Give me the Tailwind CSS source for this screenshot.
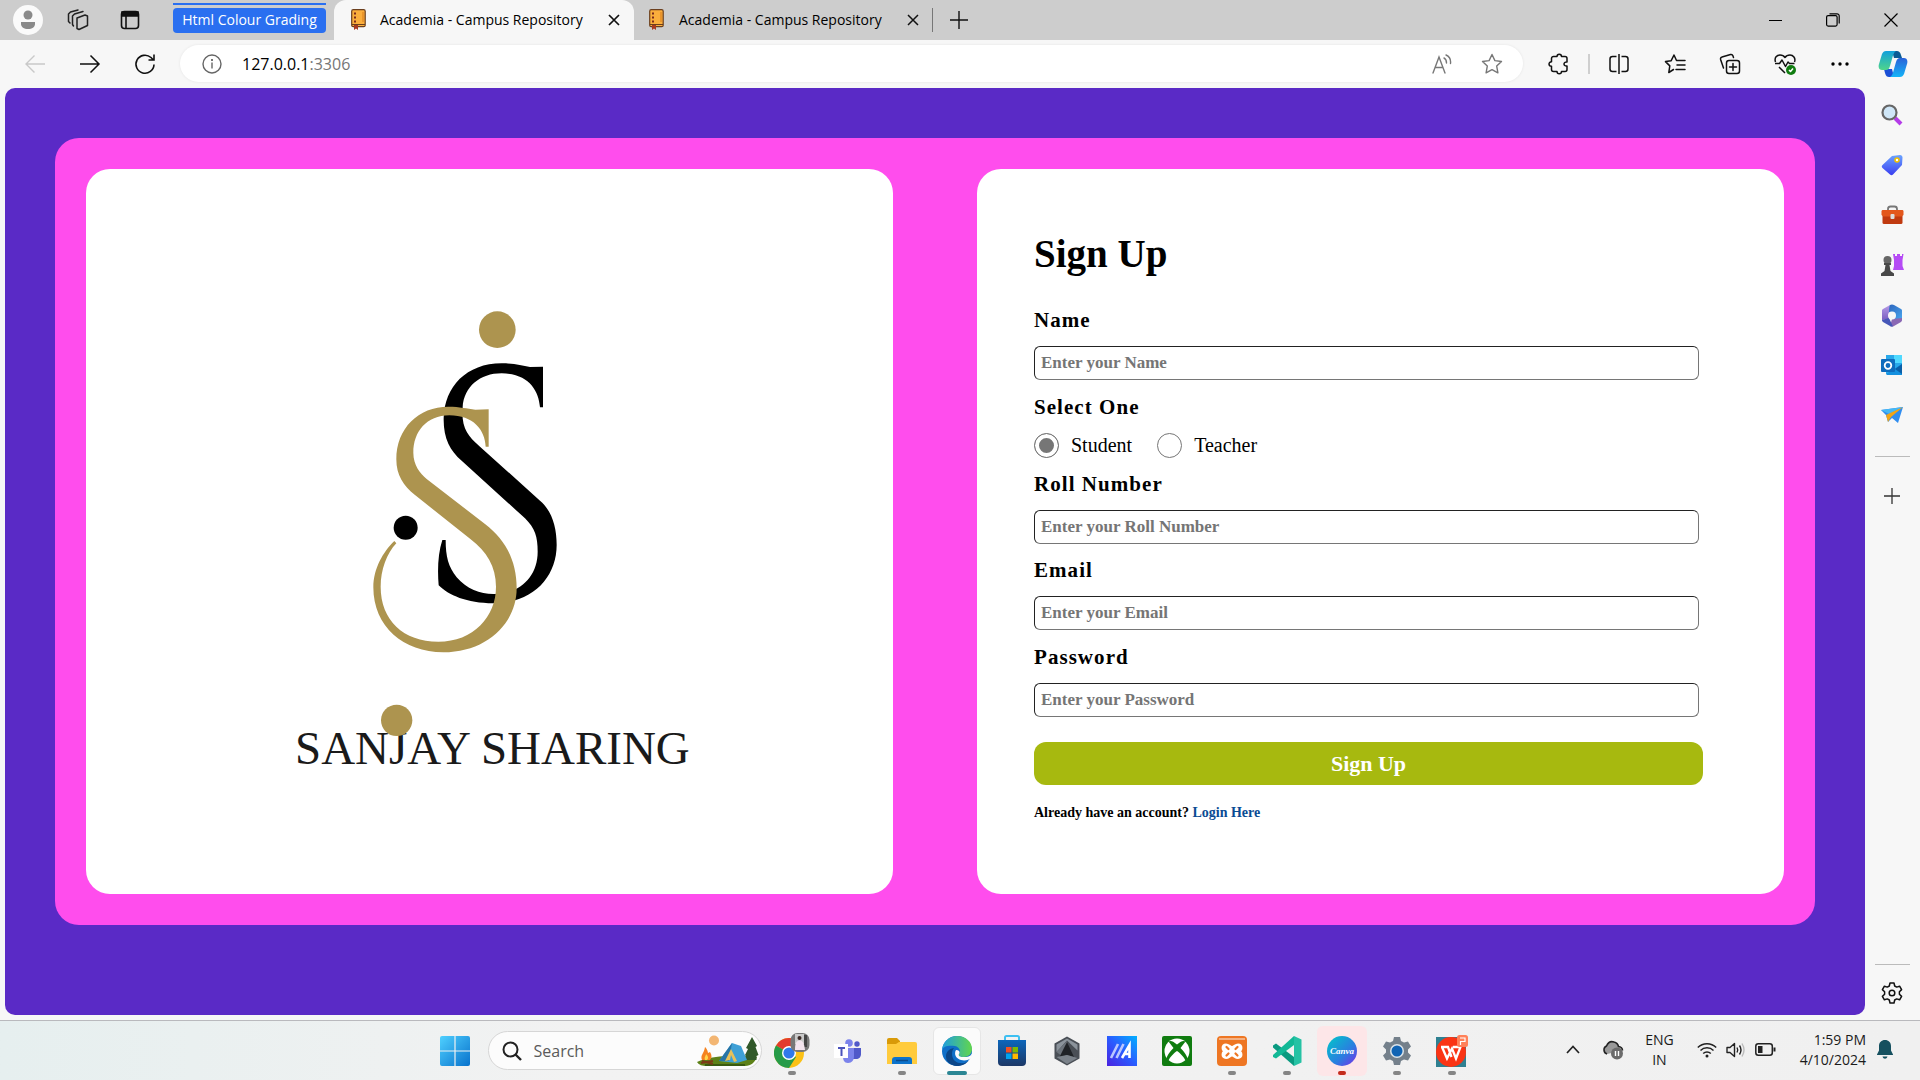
<!DOCTYPE html>
<html lang="en">
<head>
<meta charset="utf-8">
<title>Academia - Campus Repository</title>
<script src="https://cdn.jsdelivr.net/npm/@tailwindcss/browser@4"></script>
</head>
<body class="min-h-screen flex flex-col bg-[#f7f7f7] text-black font-['Open_Sans','Noto_Sans',sans-serif]">

<!-- Tab strip -->
<header class="h-10 bg-[#cdcdcd] flex items-center text-[15px]">
  <button aria-label="Profile" class="ml-[13px] size-[30px] rounded-full bg-[#fafafa] flex items-center justify-center">
    <svg width="18" height="20" viewBox="0 0 18 20" fill="#8a8a8a"><circle cx="9" cy="5" r="4.5"/><path d="M2 12h14v2c0 3-3 5-7 5s-7-2-7-5z"/></svg>
  </button>
  <button aria-label="Workspaces" class="ml-6">
    <svg width="22" height="22" viewBox="0 0 22 22" fill="none" stroke="#222" stroke-width="1.5" stroke-linejoin="round"><path d="M10 9l8-3 2.500 1v9.500l-8.500 4-2-1z"/><path d="M6.500 17L5.500 15.500V7l2-2L16 2.500M3 14l-1.500-1.500V5l2-2L11 1" stroke-linecap="round"/></svg>
  </button>
  <button aria-label="Tab actions" class="ml-[31px]">
    <svg width="20" height="20" viewBox="0 0 20 20" fill="none" stroke="#111" stroke-width="1.6"><rect x="1.5" y="1.500" width="17" height="17" rx="3"/><path d="M2 2h16v4H2z" fill="#111"/><path d="M6 6v12"/></svg>
  </button>
  <div class="ml-[33px] w-[153px] h-[30px] -mt-1 border-t-2 border-[#2a6ff0] pt-[3px]">
    <button class="w-full h-[25px] pb-[2px] rounded bg-[#2a6ff0] text-white text-[14px] leading-[22px] whitespace-nowrap flex items-center justify-center">Html Colour Grading</button>
  </div>
  <div class="ml-2 w-[300px] h-10 rounded-t-xl bg-[#f7f7f7] flex items-center pl-[17px] pr-[14px] pb-px">
    <svg width="15" height="21" viewBox="0 0 15 21"><rect x=".7" y=".7" width="13.500" height="17" rx="1.500" fill="#fbae3c" stroke="#6b3f1e" stroke-width="1.200"/><path d="M1 15.500h13" stroke="#6b3f1e"/><path d="M3 3.500h2v2H3zM3 7.500h2v2H3zM3 11.500h2v2H3z" fill="#7b2a1c"/><path d="M3 16h4v5l-2-1.500L3 21z" fill="#a8391f"/><path d="M12 3v10" stroke="#d97c1c"/></svg>
    <span class="ml-[14px] flex-1 text-[14px] whitespace-nowrap">Academia - Campus Repository</span>
    <button aria-label="Close tab"><svg width="12" height="12" viewBox="0 0 12 12" stroke="#111" stroke-width="1.700"><path d="M1 1l10 10M11 1L1 11"/></svg></button>
  </div>
  <div class="w-[298px] h-10 flex items-center pl-[15px] pr-[13px] pb-px">
    <svg width="15" height="21" viewBox="0 0 15 21"><rect x=".7" y=".7" width="13.500" height="17" rx="1.500" fill="#fbae3c" stroke="#6b3f1e" stroke-width="1.200"/><path d="M1 15.500h13" stroke="#6b3f1e"/><path d="M3 3.500h2v2H3zM3 7.500h2v2H3zM3 11.500h2v2H3z" fill="#7b2a1c"/><path d="M3 16h4v5l-2-1.500L3 21z" fill="#a8391f"/><path d="M12 3v10" stroke="#d97c1c"/></svg>
    <span class="ml-[15px] flex-1 text-[14px] whitespace-nowrap">Academia - Campus Repository</span>
    <button aria-label="Close tab"><svg width="12" height="12" viewBox="0 0 12 12" stroke="#111" stroke-width="1.500"><path d="M1 1l10 10M11 1L1 11"/></svg></button>
  </div>
  <span class="w-px h-6 bg-[#777]"></span>
  <button aria-label="New tab" class="ml-[17px]"><svg width="18" height="18" viewBox="0 0 18 18" stroke="#111" stroke-width="1.400"><path d="M9 0v18M0 9h18"/></svg></button>
  <div class="ml-auto flex items-center gap-11 pr-[22px]">
    <button aria-label="Minimize"><svg width="13" height="13" viewBox="0 0 13 13" stroke="#000"><path d="M0 6.500h13"/></svg></button>
    <button aria-label="Restore"><svg width="14" height="14" viewBox="0 0 14 14" fill="none" stroke="#000" stroke-width="1.200"><rect x=".6" y="2.600" width="10.500" height="10.500" rx="1.500"/><path d="M3.500.8H11a2.200 2.200 0 012.200 2.200v7.500"/></svg></button>
    <button aria-label="Close"><svg width="14" height="14" viewBox="0 0 14 14" stroke="#000" stroke-width="1.200"><path d="M.5.5l13 13M13.500.5l-13 13"/></svg></button>
  </div>
</header>

<!-- Address bar -->
<nav class="h-12 flex items-center pb-px">
  <button aria-label="Back" class="ml-6"><svg width="22" height="20" viewBox="0 0 22 20" fill="none" stroke="#c9c9c9" stroke-width="1.400"><path d="M21 10H2M10.500 1.500L2 10l8.500 8.500"/></svg></button>
  <button aria-label="Forward" class="ml-[33px]"><svg width="22" height="20" viewBox="0 0 22 20" fill="none" stroke="#111" stroke-width="1.500"><path d="M1 10h19M11.500 1.500L20 10l-8.500 8.500"/></svg></button>
  <button aria-label="Refresh" class="ml-[33px]"><svg width="22" height="22" viewBox="0 0 22 22" fill="none" stroke="#111" stroke-width="1.600"><path d="M20 11.500A9 9 0 1117 4.500L19.500 7M20 1.500V7h-5.500"/></svg></button>
  <div class="ml-[24px] flex-1 h-[37px] rounded-full bg-white flex items-center pl-[22px] pr-[20px] shadow-[0_0_3px_rgba(0,0,0,0.08)]">
    <svg width="20" height="20" viewBox="0 0 20 20" fill="none" stroke="#666" stroke-width="1.400"><circle cx="10" cy="10" r="9"/><path d="M10 8.500v6"/><path d="M10 5v2" stroke-width="1.800"/></svg>
    <span class="ml-[20px] flex-1 text-[16px]">127.0.0.1<span class="text-[#767676]">:3306</span></span>
    <button aria-label="Read aloud" class="mr-[29px]"><svg width="20" height="20" viewBox="0 0 20 20" fill="none" stroke="#777" stroke-width="1.400" stroke-linecap="round"><path d="M1 19L7 3l6 16M3.300 13.500h7.500M12 4c2 1 2.500 3 2.500 5M14 1c3.500 1.500 5 4.500 4.500 8.500"/></svg></button>
    <button aria-label="Favourite"><svg width="22" height="22" viewBox="0 0 22 22" fill="none" stroke="#777" stroke-width="1.400" stroke-linejoin="round"><path d="M11 1.500l2.900 6.100 6.600.9-4.800 4.600 1.200 6.700-5.900-3.200-5.900 3.200 1.200-6.700L1.500 8.500l6.600-.9z"/></svg></button>
  </div>
  <div class="ml-[25px] mr-3 flex items-center">
    <button aria-label="Extensions"><svg width="22" height="22" viewBox="0 0 22 22" fill="none" stroke="#111" stroke-width="1.500" stroke-linejoin="round"><path d="M5.500 3.500H9c0-3 4.500-3 4.500 0H17a2 2 0 012 2V9c-4-.5-4 4.500 0 4v3.500a2 2 0 01-2 2h-3.500c0 3-4.500 3-4.500 0H5.500a2 2 0 01-2-2V13.300c-3.300 0-3.300-4.600 0-4.600V5.500a2 2 0 012-2z"/></svg></button>
    <span class="mx-[18px] w-[2px] h-5 bg-[#cfcfcf]"></span>
    <button aria-label="Split screen"><svg width="22" height="22" viewBox="0 0 22 22" fill="none" stroke="#111" stroke-width="1.500"><path d="M8.500 3.500h-4a2.500 2.500 0 00-2.500 2.500v10a2.500 2.500 0 002.500 2.500h4M13.500 3.500h4A2.500 2.500 0 0120 6v10a2.500 2.500 0 01-2.500 2.500h-4M11 1v20"/></svg></button>
    <button aria-label="Favourites" class="ml-[34px]"><svg width="22" height="22" viewBox="0 0 22 22" fill="none" stroke="#111" stroke-width="1.500" stroke-linejoin="round" stroke-linecap="round"><path d="M12.500 7.500L10 2 7.200 7.700 1.500 8.600l4.300 4.300L4.800 19.500l4.700-3M12.500 7.500H21M13 12h8M12 16.500h9"/></svg></button>
    <button aria-label="Collections" class="ml-[33px]"><svg width="22" height="22" viewBox="0 0 22 22" fill="none" stroke="#111" stroke-width="1.500" stroke-linecap="round"><rect x="7.500" y="7.500" width="13" height="13" rx="2.500"/><path d="M14 10.500v7M10.500 14h7M14.500 4.500l-.6-1.700A2 2 0 0011.500 1.500L3 4A2 2 0 001.600 6.500L4.500 15"/></svg></button>
    <button aria-label="Browser essentials" class="ml-[33px]"><svg width="22" height="22" viewBox="0 0 22 22" fill="none" stroke="#111" stroke-width="1.500" stroke-linejoin="round"><path d="M1.500 9C0 4.500 3 2 6 2c2.500 0 4 1 5 2.500C12 3 13.500 2 16 2c3 0 6 3 4.500 7M1 10.500h4.500L8 7l3.500 6.500L14 9l1.500 1.500h5M5 14l6 6"/><circle cx="17" cy="17" r="5" fill="#107c10" stroke="none"/><path d="M15 17l1.500 1.500 2.500-3" stroke="#fff"/></svg></button>
    <button aria-label="More" class="ml-[35px]"><svg width="18" height="4" viewBox="0 0 18 4"><circle cx="2" cy="2" r="1.700"/><circle cx="9" cy="2" r="1.700"/><circle cx="16" cy="2" r="1.700"/></svg></button>
    <button aria-label="Copilot" class="ml-[29px]"><svg width="30" height="28" viewBox="0 0 30 28"><defs><linearGradient id="cpa" x1="0" y1="0" x2="0" y2="1"><stop offset="0" stop-color="#12a0dc"/><stop offset="1" stop-color="#4fd58a"/></linearGradient><linearGradient id="cpb" x1="0" y1="0" x2="0" y2="1"><stop offset="0" stop-color="#2a62d8"/><stop offset="1" stop-color="#14b4f8"/></linearGradient></defs><path d="M14 1h5c2 0 3 1 4 4l1 3h-8z" fill="#0b5b95"/><path d="M16 27h-5c-2 0-3-1-4-4l-1-4h8z" fill="#1a4fd6"/><path d="M8 1h10c-2 1-3 4-4 8l-2 7c-1 3-2 4-4 4H4c-3 0-4-3-3-6L4 4c1-2 2-3 4-3z" fill="url(#cpa)"/><path d="M22 27H12c2-1 3-4 4-8l2-7c1-3 2-4 4-4h4c3 0 4 3 3 6l-3 10c-1 2-2 3-4 3z" fill="url(#cpb)"/></svg></button>
  </div>
</nav>

<div class="flex-1 flex pl-[5px] pb-[5px]">
  <!-- Web page -->
  <main class="flex-1 bg-[#5a2ac6] rounded-[10px] p-[50px]">
    <div class="bg-[#ff4ded] rounded-[24px] p-[31px] grid grid-cols-2 gap-[84px]">
      <section class="bg-white rounded-[24px] flex items-center justify-center pt-4">
        <svg width="420" height="500" viewBox="0 0 1260 1500" role="img" aria-label="Sanjay Sharing">
          <path fill="#000" d="M789 230V352H780C776 300 745 250 665 250C600 250 552 290 548 352V385C552 430 580 452 600 470L780 632C815 662 830 710 830 765C830 860 760 940 640 940C560 940 505 915 476 886C472 840 474 790 487 750H497C497 800 505 830 530 862C560 897 600 912 640 912C720 912 773 860 773 785C773 740 765 715 735 685L545 512C510 482 490 445 491 385C493 290 560 220 665 220C700 220 725 226 750 231Z"/>
          <path fill="#ad944f" d="M626 358V470H617C615 420 580 376 508 376C440 376 400 425 400 488C400 525 420 550 440 567L615 702C675 748 710 810 710 895C710 1000 620 1087 490 1087C370 1087 280 1010 280 892C280 835 310 785 343 753L349 760C320 790 302 840 302 890C302 990 370 1055 475 1055C580 1055 648 980 648 890C648 830 620 785 572 748L405 615C370 588 349 555 349 508C349 415 415 350 505 350C540 350 560 356 586 359Z"/>
          <circle cx="652" cy="119" r="55" fill="#ad944f"/>
          <circle cx="377" cy="713" r="36" fill="#000"/>
          <text x="45" y="1422" font-size="141" fill="#1a1a1a" font-family="Liberation Serif, serif">SANJAY SHARING</text>
          <circle cx="350" cy="1291" r="47" fill="#ad944f"/>
        </svg>
      </section>

      <section class="bg-white rounded-[24px] pt-[61px] pb-[71px] pl-[57px] pr-[81px] font-['Liberation_Serif',serif]">
        <form>
          <h1 class="text-[39px] leading-[48px] font-bold">Sign Up</h1>
          <div class="mt-7">
            <label for="name" class="block text-[21px] leading-[28px] font-bold tracking-wider">Name</label>
            <div class="mt-3 pr-1"><input id="name" type="text" placeholder="Enter your Name" class="block w-full h-[34px] px-[6px] rounded-[6px] border border-t-[#222] border-l-[#222] border-r-[#767676] border-b-[#767676] text-[17px] font-bold placeholder:text-[#757575]"></div>
          </div>
          <fieldset class="mt-[13px]">
            <legend class="block text-[21px] leading-[28px] font-bold tracking-wider">Select One</legend>
            <div class="mt-3 h-[25px] flex items-center text-[20px] leading-[25px]">
              <input id="student" type="radio" name="role" checked class="appearance-none size-[25px] rounded-full border border-[#767676] checked:bg-[#767676] checked:shadow-[inset_0_0_0_4px_#fff]">
              <label for="student" class="ml-3">Student</label>
              <input id="teacher" type="radio" name="role" class="ml-[25px] appearance-none size-[25px] rounded-full border border-[#767676] checked:bg-[#767676] checked:shadow-[inset_0_0_0_4px_#fff]">
              <label for="teacher" class="ml-3">Teacher</label>
            </div>
          </fieldset>
          <div class="mt-3">
            <label for="roll" class="block text-[21px] leading-[28px] font-bold tracking-wider">Roll Number</label>
            <div class="mt-3 pr-1"><input id="roll" type="text" placeholder="Enter your Roll Number" class="block w-full h-[34px] px-[6px] rounded-[6px] border border-t-[#222] border-l-[#222] border-r-[#767676] border-b-[#767676] text-[17px] font-bold placeholder:text-[#757575]"></div>
          </div>
          <div class="mt-3">
            <label for="email" class="block text-[21px] leading-[28px] font-bold tracking-wider">Email</label>
            <div class="mt-3 pr-1"><input id="email" type="email" placeholder="Enter your Email" class="block w-full h-[34px] px-[6px] rounded-[6px] border border-t-[#222] border-l-[#222] border-r-[#767676] border-b-[#767676] text-[17px] font-bold placeholder:text-[#757575]"></div>
          </div>
          <div class="mt-[13px]">
            <label for="password" class="block text-[21px] leading-[28px] font-bold tracking-wider">Password</label>
            <div class="mt-3 pr-1"><input id="password" type="password" placeholder="Enter your Password" class="block w-full h-[34px] px-[6px] rounded-[6px] border border-t-[#222] border-l-[#222] border-r-[#767676] border-b-[#767676] text-[17px] font-bold placeholder:text-[#757575]"></div>
          </div>
          <button type="submit" class="mt-[25px] w-full h-[43px] rounded-xl bg-[#a7b90f] text-white text-[22px] font-bold">Sign Up</button>
          <p class="mt-[18px] text-[14px] leading-5 font-bold">Already have an account? <a href="#login" class="text-[#0a4b93]">Login Here</a></p>
        </form>
      </section>
    </div>
  </main>

  <!-- Edge sidebar -->
  <aside class="w-[55px] flex flex-col items-center pt-[2px] pr-px">
    <button aria-label="Search" class="h-[50px] flex items-center"><svg width="22" height="22" viewBox="0 0 22 22"><path d="M14 14l6 6" stroke="#b43ce8" stroke-width="4"/><circle cx="8.500" cy="8.500" r="7" fill="#cfe6f7" stroke="#666" stroke-width="2.200"/></svg></button>
    <button aria-label="Shopping" class="h-[50px] flex items-center"><svg width="22" height="22" viewBox="0 0 22 22"><defs><linearGradient id="tg" x1="0" y1="0" x2="0" y2="1"><stop offset="0" stop-color="#6ba4ff"/><stop offset="1" stop-color="#3a3df0"/></linearGradient></defs><path d="M11 2l8-1c1.500 0 2.500 1 2.500 2.500L21 11l-9 9.500c-1 1-2 1-3 0L1.500 14c-1-1-1-2 0-3z" fill="url(#tg)"/><circle cx="16" cy="6" r="2" fill="#fff" stroke="#f2c200" stroke-width="1.600"/></svg></button>
    <button aria-label="Tools" class="h-[50px] flex items-center"><svg width="23" height="20" viewBox="0 0 23 20"><path d="M7 6V4c0-2 1-2.500 2.500-2.500h4C15 1.500 16 2 16 4v2" fill="none" stroke="#777" stroke-width="1.800"/><rect x="1.500" y="9" width="20" height="10" rx="1.500" fill="#c03a10"/><path d="M.5 6.500C.5 5.500 1 5 2 5h19c1 0 1.500.5 1.500 1.500V10l-2 1.500h-18L.5 10z" fill="#e3571c"/><rect x="9.500" y="9" width="4" height="5" rx="1" fill="#ddd"/></svg></button>
    <button aria-label="Games" class="h-[50px] flex items-center"><svg width="24" height="24" viewBox="0 0 24 24"><path d="M13 1h2v2h2V1h3v2h2V1h1.500l-1 6v6l1.500 4H13l1-4V7z" fill="#b54bf5"/><circle cx="7.500" cy="7" r="4" fill="#666"/><path d="M4 10h7v2h-1.500l1 6 3.500 2.500V23H1v-2.500L4.500 18l1-6H4z" fill="#484848"/></svg></button>
    <button aria-label="Microsoft 365" class="h-[50px] flex items-center"><svg width="22" height="23" viewBox="0 0 22 23"><defs><linearGradient id="ma3" x1="0" y1="0" x2="0" y2="1"><stop offset="0" stop-color="#b69be8"/><stop offset="1" stop-color="#7a5fc0"/></linearGradient><linearGradient id="mb3" x1="0" y1="0" x2="1" y2="1"><stop offset="0" stop-color="#2a5fb8"/><stop offset="1" stop-color="#4aa8f0"/></linearGradient></defs><path d="M9 1c1-.7 3-.7 4 0l7 4c1 .6 1 1 1 2v9l-7 1-6-9-3-3z" fill="url(#mb3)"/><path d="M9 1L2 5C1 5.600 1 6 1 7v9l7-1V9c0-3 0-6 1-8z" fill="url(#ma3)"/><path d="M21 14v2c0 1-.5 1.500-1 2l-7 4c-1 .7-3 .7-4 0l2-7z" fill="#8a68b4"/><path d="M1 16l7-2 4 8.500c-1 .2-2.200 0-3-.5l-7-4c-.5-.5-1-1-1-2z" fill="#4657b8"/><circle cx="11" cy="11.500" r="4" fill="#f7f7f7"/></svg></button>
    <button aria-label="Outlook" class="h-[50px] flex items-center"><svg width="22" height="22" viewBox="0 0 22 22"><path d="M5 1h16v19H5z" fill="#28a8ea"/><path d="M13 1h8v8h-8z" fill="#50d9ff"/><path d="M5 20l16-10v11H6z" fill="#1490df"/><path d="M21 10l-7 5 7 5z" fill="#0a5fa8"/><rect x="0" y="5" width="14" height="13" rx="1" fill="#0f6cbd"/><circle cx="7" cy="11.500" r="3.300" fill="none" stroke="#fff" stroke-width="1.800"/></svg></button>
    <button aria-label="Drop" class="h-[50px] flex items-center"><svg width="23" height="18" viewBox="0 0 23 18"><path d="M0 4L22 1l-5 16-6-5-4 4-2-7z" fill="#2f8df0"/><path d="M0 4L22 1 8 8z" fill="#45b8f5"/><path d="M22 1L5 9l2 7 3-5z" fill="#f2a516"/></svg></button>
    <hr class="mt-4 w-[35px] border-[#bbb]">
    <button aria-label="Customize" class="mt-[31px]"><svg width="16" height="16" viewBox="0 0 16 16" stroke="#333" stroke-width="1.300"><path d="M8 0v16M0 8h16"/></svg></button>
    <hr class="mt-auto w-[35px] border-[#bbb]">
    <button aria-label="Settings" class="mt-[17px] mb-[11px]"><svg width="22" height="22" viewBox="0 0 22 22" fill="none" stroke="#111" stroke-width="1.500" stroke-linejoin="round"><path d="M9 1h4l.7 3 2 1.100 2.900-.9 2 3.400-2.200 2.100v2.600l2.200 2.100-2 3.400-2.900-.9-2 1.100L13 21H9l-.7-3-2-1.100-2.900.9-2-3.400 2.200-2.100V9.700L1.400 7.600l2-3.400 2.900.9 2-1.100z"/><circle cx="11" cy="11" r="2.800"/></svg></button>
  </aside>
</div>

<!-- Taskbar -->
<footer class="h-[60px] border-t border-[#b9b9bd] bg-linear-to-r from-[#e6efef] via-[#f2f2f2] via-30% to-[#f0f0f0] flex items-center">
  <div class="flex-1 pl-[14px]"></div>
  <div class="flex items-center h-full">
    <button aria-label="Start" class="w-[55px] h-full flex items-center justify-center"><svg width="30" height="30" viewBox="0 0 30 30"><defs><linearGradient id="wn" x1="0" y1="0" x2="1" y2="1" gradientUnits="objectBoundingBox"><stop offset="0" stop-color="#4fd0ff"/><stop offset="1" stop-color="#0872cc"/></linearGradient></defs><path d="M2 0h12.400v14.400H0V2a2 2 0 012-2zM15.600 0H28a2 2 0 012 2v12.400H15.600zM0 15.600h14.400V30H2a2 2 0 01-2-2zM15.600 15.600H30V28a2 2 0 01-2 2H15.600z" fill="url(#wn)"/></svg></button>
    <div class="ml-[5px] mr-[3px] w-[274px] h-[39px] rounded-full bg-[#fcfcfc] border border-[#d6d6d6] flex items-center pl-[13px] pr-[2px] overflow-hidden">
      <svg width="20" height="20" viewBox="0 0 20 20" fill="none" stroke="#222" stroke-width="2"><circle cx="8.500" cy="8.500" r="7"/><path d="M13.500 13.500L19 19" stroke-width="2.400"/></svg>
      <input aria-label="Search" placeholder="Search" class="ml-[12px] w-28 flex-1 text-[16px] placeholder:text-[#5a5a5a] bg-transparent">
      <svg width="62" height="32" viewBox="0 0 62 32"><path d="M0 27C12 21 40 19 60 22c-2 5-6 9-12 9H10c-5 0-8-1-10-4z" fill="#5d8118"/><path d="M8 30h40" stroke="#395a12" stroke-width="2"/><circle cx="17" cy="5.500" r="5" fill="#f3b673"/><path d="M55 2l5 9-1.500 1 3 8-2 1v4H49v-4l-1-1 3-6-2-1z" fill="#31592a"/><path d="M22 26L35 8l9 3 6 14-10 3z" fill="#3fa0d6"/><path d="M35 8l-3 18H22z" fill="#2774a6"/><path d="M34 14l-6 12 5-1 1-5 3 7 3-1z" fill="#e8c15a"/><path d="M5 25c-2-5 2-6 3-13 3 3 3 6 3 6l2-1c2 3 2 6 0 8z" fill="#f58220"/><path d="M8 25c-1-3 1-4 1-6 2 2 3 4 1 6z" fill="#ffd54a"/><path d="M4 28l12-2M5 26l11 3" stroke="#7a3c17" stroke-width="2"/></svg>
    </div>
    <button aria-label="Chrome" class="relative w-[55px] h-full flex items-center justify-center"><svg width="36" height="38" viewBox="0 0 36 38"><circle cx="15" cy="21" r="15" fill="#fbc116"/><path d="M15 21L2 13.500A15 15 0 0128 13.500z" fill="#e33b2e"/><path d="M15 21L2 13.500A15 15 0 0015 36l7-11z" fill="#269b48"/><circle cx="15" cy="21" r="7" fill="#fff"/><circle cx="15" cy="21" r="5.600" fill="#3079ea"/><rect x="16.500" y="1" width="19" height="19" rx="7" fill="#777"/><rect x="21" y="2" width="9" height="10" fill="#c9c9c9"/><path d="M30 3h3v12h-3z" fill="#444"/><circle cx="25.500" cy="6" r="2" fill="#3a2a26"/><path d="M21 18c0-6 1-9.500 4.500-9.500S30 11 31 18z" fill="#f3e4ee"/></svg><span class="absolute bottom-[5px] w-2 h-1 rounded-full bg-[#858585]"></span></button>
    <button aria-label="Teams" class="w-[55px] h-full flex items-center justify-center"><svg width="27" height="24" viewBox="0 0 27 24"><circle cx="15" cy="4" r="3.800" fill="#7b83eb"/><circle cx="23" cy="5" r="2.700" fill="#5059c9"/><path d="M19 9h8v6c0 3-2 5-5 5h-3z" fill="#5059c9"/><path d="M9 9h11v8c0 4-2 7-6 7s-5-3-5-7z" fill="#7b83eb"/><rect y="5" width="14" height="14" fill="#fff"/><path d="M4 8h7v2H8.500v7h-2v-7H4z" fill="#4b53bc"/></svg></button>
    <button aria-label="File Explorer" class="relative w-[55px] h-full flex items-center justify-center"><svg width="30" height="26" viewBox="0 0 30 26"><path d="M0 2a2 2 0 012-2h8l3 3v5H0z" fill="#d99a08"/><path d="M0 6h9l3-2h16a2 2 0 012 2v20H0z" fill="#ffcb3d"/><path d="M5 26v-4a3 3 0 013-3h14a3 3 0 013 3v4z" fill="#0c73cb"/><path d="M9 22.500h12" stroke="#0a4b8c" stroke-width="1.500"/></svg><span class="absolute bottom-[5px] w-2 h-1 rounded-full bg-[#858585]"></span></button>
    <button aria-label="Edge" class="relative w-[55px] h-full flex items-center justify-center"><span class="w-12 h-[48px] rounded-md bg-[#fbfbfb] border border-[#e6e6e6] flex items-center justify-center"><svg width="30" height="30" viewBox="0 0 30 30"><defs><linearGradient id="ed" x1="0" y1="0" x2="1" y2="0"><stop offset="0" stop-color="#1e9ee0"/><stop offset="1" stop-color="#62d64c"/></linearGradient></defs><circle cx="15" cy="15" r="15" fill="#0f6fc8"/><path d="M0 14C1 5 8 0 15 0c9 0 15 6 15 13 0 5-4 8-8 8-4 0-6-1-5-3 2-2 1-7-4-8C7 9 1 10 0 14z" fill="url(#ed)"/><path d="M12 12c-4 5-2 14 6 15 4 1 8-1 10-4-5 8-15 9-21 4-5-4-4-14 5-15z" fill="#0b4688"/><path d="M14 14c-2 3-1 8 5 10 4 1 8 0 10-2l2-6c-2 4-5 5-9 5-4 0-6-1-5-3 1-1 1-4-3-4z" fill="#fbfbfb"/></svg></span><span class="absolute bottom-[5px] w-5 h-1 rounded-full bg-[#2b8694]"></span></button>
    <button aria-label="Microsoft Store" class="w-[55px] h-full flex items-center justify-center"><svg width="30" height="32" viewBox="0 0 30 32"><defs><linearGradient id="st" x1="0" y1="0" x2="0" y2="1"><stop offset="0" stop-color="#0c66bb"/><stop offset="1" stop-color="#1c3766"/></linearGradient></defs><path d="M8 7V2.500C8 1.500 8.500 1 9.500 1h11c1 0 1.500.5 1.500 1.500V7" fill="none" stroke="#3ec0f2" stroke-width="2"/><path d="M1 5h28v22a4 4 0 01-4 4H5a4 4 0 01-4-4z" fill="url(#st)"/><path d="M9 12h5.500v5.500H9z" fill="#f25022"/><path d="M15.500 12H21v5.500h-5.500z" fill="#7fba00"/><path d="M9 18.500h5.500V24H9z" fill="#00a4ef"/><path d="M15.500 18.500H21V24h-5.500z" fill="#ffb900"/></svg></button>
    <button aria-label="Armoury Crate" class="w-[55px] h-full flex items-center justify-center"><svg width="28" height="30" viewBox="0 0 28 30"><path d="M14 .5l12.500 7v15L14 29.500 1.500 22.500v-15z" fill="#4a4f56"/><path d="M14 2.500l10.500 6v6L14 4.500 3.500 16V8.500z" fill="#8b939b"/><path d="M3.500 16L14 5l1 14-5 2z" fill="#6c737b"/><path d="M14 6l7 15-7-2-8 3z" fill="#202327"/><path d="M3.500 21l10.500-2 10.500 3-10.500 6z" fill="#7b828a"/></svg></button>
    <button aria-label="MyASUS" class="w-[55px] h-full flex items-center justify-center"><svg width="30" height="30" viewBox="0 0 30 30"><defs><linearGradient id="ma" x1="0" y1="1" x2="1" y2="0"><stop offset="0" stop-color="#4a22e0"/><stop offset=".5" stop-color="#2a5cff"/><stop offset="1" stop-color="#00b0ff"/></linearGradient></defs><path d="M0 0h30v30H0z" fill="url(#ma)"/><path d="M4 22L11 8M9.500 22l7-14" fill="none" stroke="#b9c6ff" stroke-width="2.600"/><path d="M15 22l7.500-13V22M18 18h4" fill="none" stroke="#fff" stroke-width="2.600"/></svg></button>
    <button aria-label="Xbox" class="w-[55px] h-full flex items-center justify-center"><svg width="30" height="30" viewBox="0 0 30 30"><rect width="30" height="30" rx="2" fill="#107c10"/><circle cx="15" cy="15" r="12.500" fill="#fff"/><path d="M6.500 5.500C9 4 12 6 15 8.500 18 6 21 4 23.500 5.500L18.500 12c3 3 7 8 7 11l-2 1.500C22 21 18 17 15 15c-3 2-7 6-8.500 9.500L4.500 23c0-3 4-8 7-11z" fill="#107c10"/></svg></button>
    <button aria-label="XAMPP" class="relative w-[55px] h-full flex items-center justify-center"><svg width="30" height="30" viewBox="0 0 30 30"><rect width="30" height="30" rx="4" fill="#ee7623"/><path d="M2 2h26v2H2z" fill="#f3b184"/><path d="M9 9.500C5.500 9.500 6 14 9 15c-3 1.500-3.500 6 0 6 2.500 0 3.500-2.500 6-2.500s3.500 2.500 6 2.500c3.500 0 3-4.500 0-6 3-1 3.500-5.500 0-5.500-2.500 0-3.500 2.500-6 2.500s-3.500-2.500-6-2.500z" fill="#fff" stroke="#fff" stroke-width="4" stroke-linejoin="round"/><path d="M9.500 11l2 2M20.500 11l-2 2M9.500 19.500l2-2M20.500 19.500l-2-2" stroke="#ee7623" stroke-width="2.200" stroke-linecap="round"/></svg><span class="absolute bottom-[5px] w-2 h-1 rounded-full bg-[#858585]"></span></button>
    <button aria-label="VS Code" class="relative w-[55px] h-full flex items-center justify-center"><svg width="30" height="30" viewBox="0 0 30 30"><path d="M1 9.500L4 7.500 22 21v9L1 11.500z" fill="#0a9a80"/><path d="M1 19L22 0v9L4 22.500 1 21z" fill="#12b896"/><path d="M22 0l7.500 3.500v23L22 30z" fill="#25c2a4"/></svg><span class="absolute bottom-[5px] w-2 h-1 rounded-full bg-[#858585]"></span></button>
    <button aria-label="Canva" class="relative w-[55px] h-full flex items-center justify-center"><span class="w-[50px] h-[50px] rounded-md bg-[#fde6e8] flex items-center justify-center"><svg width="30" height="30" viewBox="0 0 30 30"><defs><linearGradient id="cv" x1="0" y1="0" x2="1" y2="1"><stop offset="0" stop-color="#00c9c8"/><stop offset=".6" stop-color="#2b7de0"/><stop offset="1" stop-color="#7d2ae8"/></linearGradient></defs><circle cx="15" cy="15" r="15" fill="url(#cv)"/><text x="15" y="18" text-anchor="middle" font-size="9" font-style="italic" font-weight="bold" fill="#fff" font-family="Liberation Serif, serif">Canva</text></svg></span><span class="absolute bottom-[5px] w-2 h-1 rounded-full bg-[#c42b1c]"></span></button>
    <button aria-label="Settings" class="relative w-[55px] h-full flex items-center justify-center"><svg width="30" height="30" viewBox="0 0 30 30"><path d="M12 1h6l1 4 3 1.500 4-1 3 5-3 3v3l3 3-3 5-4-1-3 1.500-1 4h-6l-1-4-3-1.500-4 1-3-5 3-3v-3l-3-3 3-5 4 1L11 5z" fill="#74808b"/><circle cx="15" cy="15" r="7" fill="#dce4ea"/><circle cx="15" cy="15" r="5.500" fill="#1164b4"/></svg><span class="absolute bottom-[5px] w-2 h-1 rounded-full bg-[#858585]"></span></button>
    <button aria-label="WPS Office" class="relative w-[55px] h-full flex items-center justify-center"><svg width="32" height="34" viewBox="0 0 32 34"><path d="M0 3h30v30H0z" fill="#2f8091"/><circle cx="15" cy="18" r="15" fill="#fa3414"/><path d="M5 13h7l3.500 10M6 13l5 11.500 5-10 4 10L24.500 13H17" fill="none" stroke="#fff" stroke-width="2.300"/><rect x="21" y="1" width="11" height="12" rx="2.500" fill="#ff8159"/><path d="M24 4h5v3.500h-4.500V11" fill="none" stroke="#fff" stroke-width="1.200"/></svg><span class="absolute bottom-[5px] w-2 h-1 rounded-full bg-[#858585]"></span></button>
  </div>
  <div class="flex-1 flex items-center justify-end text-[15px] leading-5 text-[#1b1b1b] pr-[27px] pb-[2px]">
    <button aria-label="Show hidden icons"><svg width="14" height="9" viewBox="0 0 14 9" fill="none" stroke="#222" stroke-width="1.700"><path d="M1 8l6-6.500L13 8"/></svg></button>
    <svg class="ml-[22px]" width="22" height="20" viewBox="0 0 22 20"><path d="M5 14a4.300 4.300 0 01-.5-8C6 2.500 9 1 12 2c2 .5 4 2 4.500 4.500 2.500 0 4 2 4 4" fill="#999" stroke="#222" stroke-width="1.600"/><circle cx="15" cy="13.500" r="6" fill="#6b6b6b"/><path d="M13.500 11v5M16.500 11v5" stroke="#fff" stroke-width="1.400"/></svg>
    <div class="ml-[21px] text-center text-[14px]">ENG<br>IN</div>
    <div class="ml-[23px] flex items-center gap-[9px]">
      <svg width="20" height="16" viewBox="0 0 20 16" fill="none" stroke="#222" stroke-width="1.500"><path d="M.8 5.500a13 13 0 0118.400 0M3.500 8.500a9.200 9.200 0 0113 0M6.200 11.500a5.400 5.400 0 017.600 0"/><circle cx="10" cy="14" r="1.500" fill="#222" stroke="none"/></svg>
      <svg width="20" height="16" viewBox="0 0 20 16" fill="none" stroke="#222" stroke-width="1.400" stroke-linejoin="round"><path d="M1 5.500h3L8.500 1.500v13L4 10.500H1z"/><path d="M11 5.500q1.500 2.500 0 5M13.500 3.500q3 4.500 0 9"/><path d="M16 1.500q4 6.500 0 13" stroke="#bbb"/></svg>
      <svg width="21" height="13" viewBox="0 0 21 13"><rect x=".8" y=".8" width="16.500" height="11.400" rx="2.500" fill="none" stroke="#222" stroke-width="1.500"/><rect x="3" y="3" width="4.500" height="7" fill="#222"/><path d="M18.500 4.500h2v4h-2z" fill="#222"/></svg>
    </div>
    <div class="ml-[24px] text-right text-[14px]">1:59 PM<br>4/10/2024</div>
    <button aria-label="Notifications" class="ml-[11px]"><svg width="16" height="19" viewBox="0 0 16 19" fill="#15505f"><path d="M8 0c3.500 0 6 2.500 6 6v4.500l2 4V15H0v-.5l2-4V6c0-3.500 2.500-6 6-6zM5.500 16.500h5c-.5 1.500-1.500 2.200-2.500 2.200s-2-.7-2.500-2.200z"/></svg></button>
  </div>
</footer>
</body>
</html>
